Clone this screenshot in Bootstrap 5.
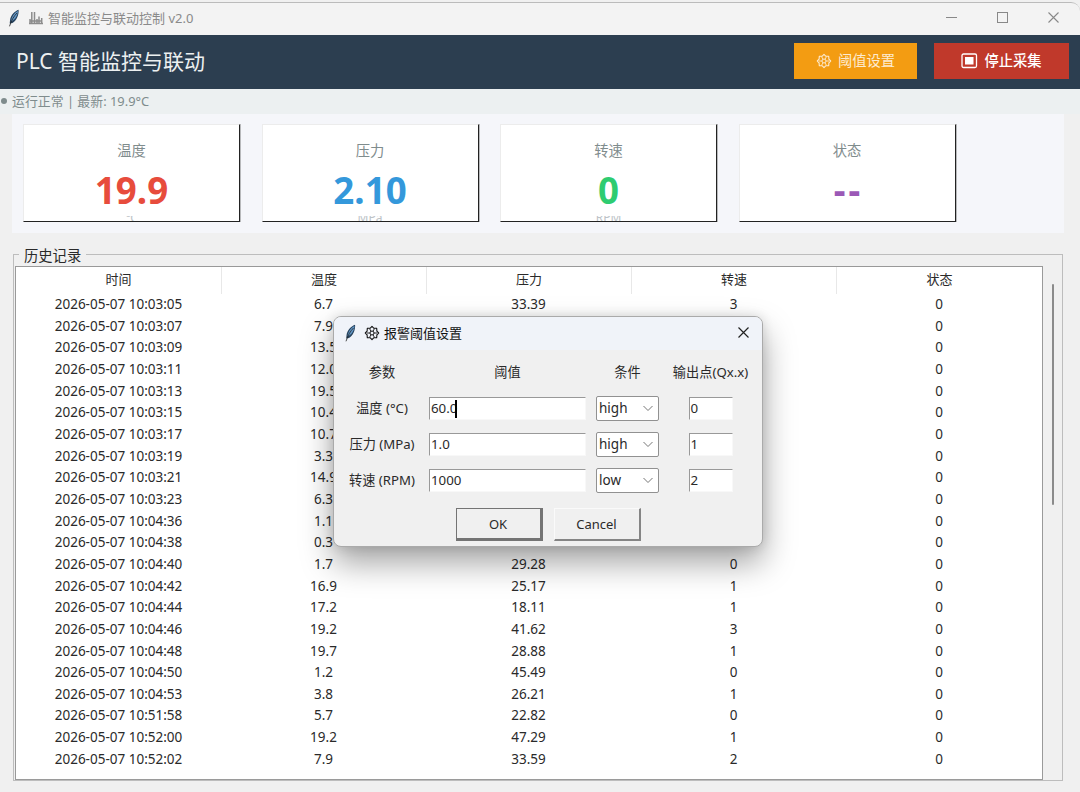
<!DOCTYPE html>
<html lang="zh-CN">
<head>
<meta charset="utf-8">
<title>智能监控与联动控制 v2.0</title>
<link href="https://cdn.jsdelivr.net/npm/bootstrap@5.3.0/dist/css/bootstrap.min.css" rel="stylesheet">
<style>
body{width:1080px;height:792px;overflow:hidden;background:#f0f0f0;font:13.5px/20px "Noto Sans","Noto Sans CJK SC",sans-serif;color:#2a2a2a}
.window{width:1080px;height:792px}
.win-title{height:33px;margin-top:2px;background:#f3f3f3;border-top:1px solid #bbb;border-radius:0 9px 0 0;color:#8a8a8a;font-size:13px;padding:0 0 3px 7px}
.win-btns{gap:38px;padding-right:20px}
.top-band{height:54px;background:#2c3e50;padding:0 11px 2px 16px}
.top-band h1{font-size:21px;line-height:30px;color:#ecf0f1;font-weight:400}
.act{height:36px;color:#fff;border-radius:0;padding:0;font-size:14.3px;line-height:20px}
.act-set{width:123px;background:#f39c12;color:#fdebd0;margin-right:17px}
.act-stop{width:135px;background:#c0392b;font-weight:500}
.status-line{height:25px;background:#ecf0f1;color:#7f8c8d;font-size:12.9px;padding-bottom:2px}
.status-line .dot{width:6px;height:6px;background:#7f8c8d;margin:0 5px 0 1px}
.metrics{width:1052px;height:119px;margin-left:12px;background:#f5f6fa;padding:10px 0 0 11px;gap:21.5px}
.metric{width:217px;height:98px;background:#fff;border:1px solid #ececec;border-right:1px solid #222;border-bottom:1px solid #222;box-shadow:1px 0 0 #b8b9bb;text-align:center;overflow:hidden}
.metric .cap{font-size:14.3px;color:#7f8c8d;margin-top:15px;line-height:22px}
.metric .val{font-size:36.7px;line-height:38px;height:38px;font-weight:700;margin-top:9px}
.metric .val-dash{letter-spacing:3px;padding-left:3px}
.metric .unit-wrap{height:6px;overflow:hidden;margin-top:7px}
.metric .unit{font-size:12px;line-height:12px;margin-top:-4px;color:#bdc3c7}
.history{position:relative;width:1050px;height:527px;margin:21px 0 0 13px;border:1px solid #bdbdbd;padding:11px 0 0 1px}
.history .legend-text{position:absolute;left:5px;top:-9px;background:#f0f0f0;padding:0 5px;font-size:14.3px;line-height:20px}
.grid-view{width:1028px;height:514px;background:#fff;border:1px solid #9a9a9a;border-top-color:#999}
.cols{display:grid;grid-template-columns:205px 205px 205px 205px 1fr;text-align:center}
.cols-head{height:27px;line-height:25px;font-size:13px}
.cols-head div+div{border-left:1px solid #e8e8e8}
.cols-row{height:21.67px;line-height:21.67px}
.thumb{width:2px;height:221px;background:#8b8b8b;margin:18px 0 0 9px;border-radius:1px}
.dialog-win{position:absolute;left:333px;top:316px;width:430px;height:231px;background:#f0f0f0;border:1px solid #aaa;border-radius:8px;box-shadow:0 16px 32px rgba(0,0,0,.36),0 0 12px rgba(0,0,0,.12);overflow:hidden;color:#2a2a2a}
.dialog-title{height:33px;background:#f0f3f9;color:#111;font-size:13px;padding:0 12px 2px 10px}
.form-cells{display:grid;grid-template-columns:94px 157px 83px 83px;grid-template-rows:36px 36px 36px 36px;align-items:center;justify-items:center;margin:4px 0 0 1px;font-size:13.2px}
.entry{height:23px;background:#fff;border:1px solid #f8f8f8;border-top-color:#999;border-left-color:#999;font-size:13.3px;line-height:21px;padding-left:1px;justify-self:stretch;white-space:nowrap}
.entry-out{width:44px;justify-self:center}
.combo{width:63px;height:25px;border:1px solid #919191;border-radius:2px;background:#fff;padding:0 5px 0 2px;font-size:13.5px}
.caret{display:inline-block;width:2px;height:18px;background:#000;vertical-align:middle;margin-left:-2px}
.dlg-btn{width:87px;height:33px;border-radius:0;background:#f0f0f0;padding:0;font-size:13px;line-height:20px;color:#2a2a2a}
.dlg-ok{border:2px solid #747474;border-right-width:3px;border-bottom-width:3px;border-top-width:1px;border-left-width:1px}
.dlg-cancel{border:1px solid #fafafa;border-right:2px solid #858585;border-bottom:2px solid #858585}
</style>
</head>
<body>
<svg width="0" height="0" class="position-absolute">
<symbol id="feather" viewBox="0 0 12 18"><path d="M10.600.7C7 2 2.500 6 2 11.500L1.700 14.500 4.500 14C8.500 11.500 11 6 10.600.7Z" fill="#28445f"/><path d="M10 1.700C6 4 3.500 8 3 12.500 7 10.500 9.500 7 10 1.700Z" fill="#6398c8"/><path d="M9 4C6 7 3.500 11 1.500 17.300" stroke="#222" stroke-width=".8" fill="none"/></symbol>
<symbol id="gear" viewBox="0 0 16 16"><g fill="none" stroke="currentColor"><path d="M8 1.300L9.900 3.300 12.700 3.300 12.900 6.100 14.700 8 12.900 9.900 12.700 12.700 9.900 12.700 8 14.700 6.100 12.700 3.300 12.700 3.100 9.900 1.300 8 3.100 6.100 3.300 3.300 6.100 3.300Z" stroke-width="1.100" stroke-linejoin="round"/><circle cx="8" cy="8" r="2" stroke-width="1"/><path d="M9 6.300L10.400 3.700M7 6.300L5.600 3.700M10 8h3M6 8H3M9 9.700l1.400 2.600M7 9.700l-1.400 2.600" stroke-width=".9"/></g></symbol>
</svg>
<div class="window d-flex flex-column">
<header class="win-title d-flex align-items-center flex-shrink-0">
<svg width="14" height="18"><use href="#feather"/></svg>
<svg class="ms-2" width="14" height="14" viewBox="0 0 14 14"><path d="M1 13V8M2.800 13V1M5.500 13V1M8 13V8M10 13V5.500M12.700 13V7M0 12.500h14M1 10h12" stroke="#8c8c8c" stroke-width="1.500"/></svg>
<span style="margin-left:5px">智能监控与联动控制 v2.0</span>
<div class="win-btns ms-auto d-flex align-items-center">
<svg width="13" height="13"><path d="M1 6.500h11" stroke="#888"/></svg>
<svg width="13" height="13"><rect x="1.500" y="1.500" width="10" height="10" fill="none" stroke="#888"/></svg>
<svg width="13" height="13"><path d="M1.500 1.500l10 10M11.500 1.500l-10 10" stroke="#888" stroke-width="1.100"/></svg>
</div>
</header>
<div class="top-band d-flex align-items-center flex-shrink-0">
<h1 class="m-0 me-auto">PLC 智能监控与联动</h1>
<button class="btn act act-set d-flex align-items-center justify-content-center border-0"><svg style="margin-right:6px" width="16" height="16"><use href="#gear"/></svg>阈值设置</button>
<button class="btn act act-stop d-flex align-items-center justify-content-center border-0"><svg width="17" height="16" style="margin-right:6px"><rect x="1" y="1" width="14.500" height="13.500" rx="1.500" fill="none" stroke="#fff" stroke-width="1.300"/><rect x="4" y="4" width="8.500" height="7.500" fill="#fff"/></svg>停止采集</button>
</div>
<div class="status-line d-flex align-items-center flex-shrink-0"><span class="dot rounded-circle"></span>运行正常 | 最新: 19.9°C</div>
<section class="metrics d-flex flex-shrink-0">
<div class="metric"><div class="cap">温度</div><div class="val" style="color:#e74c3c">19.9</div><div class="unit-wrap"><div class="unit">℃</div></div></div>
<div class="metric"><div class="cap">压力</div><div class="val" style="color:#3498db">2.10</div><div class="unit-wrap"><div class="unit">MPa</div></div></div>
<div class="metric"><div class="cap">转速</div><div class="val" style="color:#2ecc71">0</div><div class="unit-wrap"><div class="unit">RPM</div></div></div>
<div class="metric"><div class="cap">状态</div><div class="val val-dash" style="color:#9b59b6">--</div></div>
</section>
<section class="history d-flex flex-shrink-0">
<span class="legend-text">历史记录</span>
<div class="grid-view flex-shrink-0">
<div class="cols cols-head"><div>时间</div><div>温度</div><div>压力</div><div>转速</div><div>状态</div></div>
<div id="rows"></div>
</div>
<div class="thumb"></div>
</section>
</div>
<div class="dialog-win">
<div class="dialog-title d-flex align-items-center"><svg width="13" height="18"><use href="#feather"/></svg><svg style="margin:0 4px 0 7px" width="16" height="16"><use href="#gear"/></svg>报警阈值设置<svg class="ms-auto" width="13" height="13"><path d="M1.500 1.500l10 10M11.500 1.500l-10 10" stroke="#222" stroke-width="1.200"/></svg></div>
<div class="form-cells">
<div>参数</div><div>阈值</div><div>条件</div><div>输出点(Qx.x)</div>
<div>温度 (°C)</div><div class="entry">60.0<span class="caret"></span></div><div class="combo d-flex align-items-center justify-content-between">high<svg width="10" height="7"><path d="M.5 1l4.500 4.500L9.500 1" fill="none" stroke="#777"/></svg></div><div class="entry entry-out">0</div>
<div>压力 (MPa)</div><div class="entry">1.0</div><div class="combo d-flex align-items-center justify-content-between">high<svg width="10" height="7"><path d="M.5 1l4.500 4.500L9.500 1" fill="none" stroke="#777"/></svg></div><div class="entry entry-out">1</div>
<div>转速 (RPM)</div><div class="entry">1000</div><div class="combo d-flex align-items-center justify-content-between">low<svg width="10" height="7"><path d="M.5 1l4.500 4.500L9.500 1" fill="none" stroke="#777"/></svg></div><div class="entry entry-out">2</div>
</div>
<div class="d-flex justify-content-center" style="gap:11px;margin-top:10px"><button class="btn dlg-btn dlg-ok">OK</button><button class="btn dlg-btn dlg-cancel">Cancel</button></div>
</div>
<script>
const data=[["10:03:05","6.7","33.39","3"],["10:03:07","7.9","",""],["10:03:09","13.5","",""],["10:03:11","12.0","",""],["10:03:13","19.5","",""],["10:03:15","10.4","",""],["10:03:17","10.7","",""],["10:03:19","3.3","",""],["10:03:21","14.9","",""],["10:03:23","6.3","",""],["10:04:36","1.1","",""],["10:04:38","0.3","10.12","0"],["10:04:40","1.7","29.28","0"],["10:04:42","16.9","25.17","1"],["10:04:44","17.2","18.11","1"],["10:04:46","19.2","41.62","3"],["10:04:48","19.7","28.88","1"],["10:04:50","1.2","45.49","0"],["10:04:53","3.8","26.21","1"],["10:51:58","5.7","22.82","0"],["10:52:00","19.2","47.29","1"],["10:52:02","7.9","33.59","2"]];
document.getElementById("rows").innerHTML=data.map(r=>`<div class="cols cols-row"><div>2026-05-07 ${r[0]}</div><div>${r[1]}</div><div>${r[2]}</div><div>${r[3]}</div><div>0</div></div>`).join("");
</script>
<script src="https://cdn.jsdelivr.net/npm/bootstrap@5.3.0/dist/js/bootstrap.bundle.min.js"></script>
</body>
</html>
